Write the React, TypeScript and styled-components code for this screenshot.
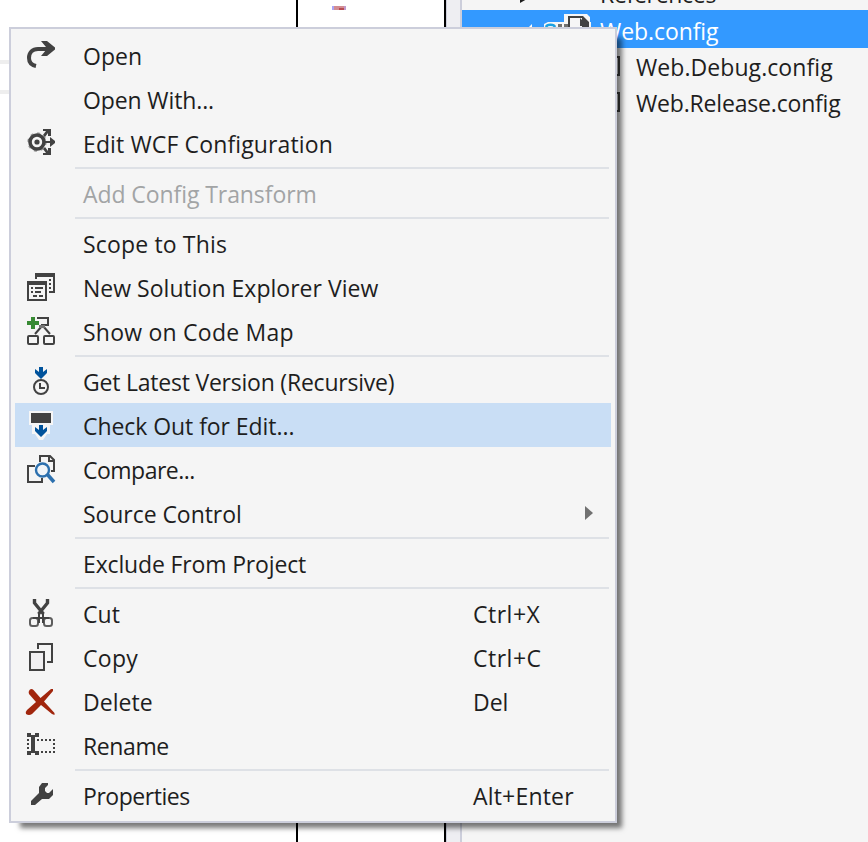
import React from "react";
import styled, { createGlobalStyle } from "styled-components";

const GlobalStyle = createGlobalStyle`
  body { margin: 0; background: #fff; overflow: hidden; }
  * { box-sizing: border-box; }
`;

const ink = "#424242";
const blue = "#00539c";

const Screen = styled.main`
  position: relative;
  display: flex;
  width: 868px;
  height: 842px;
  overflow: hidden;
  background: #fff;
  color: #1e1e1e;
  font: 23px/1 "Open Sans", "Noto Sans", sans-serif;
  white-space: pre;
`;
const Editor = styled.section`
  width: 298px;
  padding-top: 60px;
  border-right: 2px solid #000;
`;
const Rules = styled.div`
  height: 34px;
  border: solid #eee;
  border-width: 4px 0;
`;
const Document = styled.section`
  width: 148px;
  padding: 6px 0 0 34px;
  border-right: 2px solid #000;
`;
const Splitter = styled.div`
  width: 16px;
  background: #eeeef2;
  border: solid #cccedb;
  border-width: 0 2px 0 1px;
`;
const Explorer = styled.aside`
  flex: 1;
  background: #f5f5f5;
  overflow: hidden;
`;
const TreeRow = styled.div<{ $selected?: boolean; $height: number; $indent: number }>`
  display: flex;
  align-items: flex-end;
  height: ${(p) => p.$height}px;
  padding-left: ${(p) => p.$indent}px;
  background: ${(p) => (p.$selected ? "#3399ff" : "transparent")};
  color: ${(p) => (p.$selected ? "#fff" : "#1e1e1e")};
`;
const TreeLabel = styled.span<{ $track: number; $lift?: boolean }>`
  height: ${(p) => (p.$lift ? 33 : 32)}px;
  line-height: 32px;
  letter-spacing: ${(p) => p.$track}px;
`;
const Drawing = styled.svg`
  display: block;
  flex: none;
  overflow: visible;
`;

const Menu = styled.div`
  position: absolute;
  left: 9px;
  top: 27px;
  width: 608px;
  height: 796px;
  padding: 4px;
  background: #f5f5f5;
  border: 2px solid #cccedb;
  box-shadow: 8px 8px 5px -3px rgba(0, 0, 0, 0.53);
`;
const Item = styled.div<{ $active?: boolean; $disabled?: boolean }>`
  display: grid;
  grid-template-columns: 58px 390px 112px 1fr;
  align-items: center;
  height: 44px;
  padding-left: 10px;
  background: ${(p) => (p.$active ? "#c9def5" : "transparent")};
  color: ${(p) => (p.$disabled ? "#a2a4a5" : "#1e1e1e")};
`;
const Label = styled.span<{ $track: number }>`
  padding-top: 2px;
  line-height: 32px;
  letter-spacing: ${(p) => p.$track}px;
`;
const Separator = styled.div`
  height: 6px;
  margin: 0 2px 0 60px;
  border: solid transparent;
  border-width: 2px 0;
  background: #dee1e6 content-box;
`;

const Plain = { fill: "none", stroke: ink, strokeWidth: 2 };
const downArrow = "M14 0h4v5l4-3v4l-6 6-6-6V2l4 3z";

const icons: Record<string, React.ReactNode> = {
  open: (
    <g>
      <path d="M11 27C6.500 26 4 23 4 19c0-5.500 3.500-9 9-9h12" fill="none" stroke={ink} strokeWidth="4" />
      <path d="M16 2h6l8 6.500v2L22 17h-6l5-6V8z" fill={ink} />
    </g>
  ),
  wcf: (
    <g fill={ink}>
      <circle cx="12" cy="15" r="7" fill="none" stroke={ink} strokeWidth="3.600" />
      <circle cx="12" cy="15" r="9" fill="none" stroke={ink} strokeWidth="1.400" strokeDasharray="3 4.070" opacity="0.5" />
      <circle cx="12" cy="15" r="2.600" />
      <path d="M19 14h6v-4l5 4v2l-5 4v-4h-6z" />
      <path d="M18 2h8v7h-3V6l-3 4-2-2 3-4h-3zM18 28h8v-7h-3v3l-3-4-2 2 3 4h-3z" />
    </g>
  ),
  windows: (
    <g fill={ink} shapeRendering="crispEdges">
      <path d="M10 2h20v20h-6v-2h4V6H12v2h-2zM24 8h2v2h-2zM24 12h2v2h-2zM24 16h2v2h-2z" />
      <path fillRule="evenodd" d="M2 10h20v20H2zM4 14v14h16V14z" />
      <path d="M6 16h2v2H6zM10 16h8v2h-8zM6 20h2v2H6zM10 20h6v2h-6zM8 24h4v2H8zM14 24h4v2h-4z" />
    </g>
  ),
  map: (
    <g>
      <path d="M12 3h11v7h-7M17 11l-7 8M18 11l7 8" {...Plain} />
      <path d="M14 10h6v3h-6z" fill="#777" />
      <rect x="3" y="21" width="10" height="8" rx="1" {...Plain} />
      <rect x="19" y="21" width="10" height="8" rx="1" {...Plain} />
      <path d="M6 2h4v4h4v4h-4v4H6v-4H2V6h4z" fill="#388a34" />
    </g>
  ),
  latest: (
    <g>
      <path d={downArrow} transform="translate(0 2)" fill={blue} />
      <circle cx="16" cy="22" r="7" {...Plain} />
      <path d="M15 18v5h5" {...Plain} />
    </g>
  ),
  checkout: (
    <g>
      <path d="M4 2h24v14h-3v9h-3l-4 6h-4l-4-6H7v-9H4z" fill="#f6f6f6" />
      <path d="M6 4h20v10H6z" fill={ink} />
      <path d={downArrow} transform="translate(0 16)" fill={blue} />
    </g>
  ),
  compare: (
    <g>
      <path d="M15 9V3h10l4 4v11h-3M24 3v5h5M10 13H3v16h14v-4" {...Plain} />
      <circle cx="17.500" cy="17" r="6.500" fill="#f0f4f8" stroke="#2c70ae" strokeWidth="2.400" />
      <path d="M22 21l7 8" fill="none" stroke="#2c70ae" strokeWidth="3.500" />
    </g>
  ),
  cut: (
    <g fill="none" stroke={ink}>
      <path d="M9.500 2v4l9 11M22.500 2v4l-9 11" strokeWidth="3.400" />
      <path d="M14 16v10M18 16v10M8 21h16" strokeWidth="2" />
      <rect x="5" y="21" width="8" height="8" rx="2.500" strokeWidth="2" opacity="0.85" />
      <rect x="19" y="21" width="8" height="8" rx="2.500" strokeWidth="2" opacity="0.85" />
    </g>
  ),
  copy: (
    <g>
      <path d="M13 8V3h14v18h-5" {...Plain} />
      <path d="M5 11h14v18H5z" fill="#f0eff1" stroke={ink} strokeWidth="2" />
    </g>
  ),
  remove: (
    <path d="M4.500 5q2-2 4 0l7 8L26 4h2v2L19 16.500 29.500 28v2L27 29l-11-9-9 9q-3 2-6 0-1-2 1-4l9-8-7-8q-1-2 .500-4z" fill="#a1260d" />
  ),
  rename: (
    <g fill={ink} shapeRendering="crispEdges">
      <path d="M2 4h4v2h4V4h4v4h-4v14h4v4h-4v-2H6v2H2v-4h4V8H2z" />
      <path d="M12 11h18M12 23h18" stroke={ink} strokeWidth="2" strokeDasharray="2 2" />
      <path d="M3 10v12M29 10v14" stroke={ink} strokeWidth="2" strokeDasharray="2 2" />
    </g>
  ),
  wrench: (
    <path d="M17 4h6v2l-3 3v3l2 2h2l4-4v6l-4 4h-7l-7 6H6v-4l8-8V8z" fill={ink} />
  ),
};

type Entry = { text: string; icon?: string; track: number; keys?: string; keyTrack?: number; active?: boolean; disabled?: boolean; submenu?: boolean };

const groups: Entry[][] = [
  [
    { text: "Open", icon: "open", track: 0 },
    { text: "Open With...", track: -0.12 },
    { text: "Edit WCF Configuration", icon: "wcf", track: 0.13 },
  ],
  [{ text: "Add Config Transform", disabled: true, track: -0.08 }],
  [
    { text: "Scope to This", track: 0.16 },
    { text: "New Solution Explorer View", icon: "windows", track: 0.02 },
    { text: "Show on Code Map", icon: "map", track: 0.23 },
  ],
  [
    { text: "Get Latest Version (Recursive)", icon: "latest", track: -0.22 },
    { text: "Check Out for Edit...", icon: "checkout", active: true, track: -0.06 },
    { text: "Compare...", icon: "compare", track: -0.5 },
    { text: "Source Control", submenu: true, track: -0.06 },
  ],
  [{ text: "Exclude From Project", track: -0.15 }],
  [
    { text: "Cut", icon: "cut", keys: "Ctrl+X", track: 0.1, keyTrack: 0.5 },
    { text: "Copy", icon: "copy", keys: "Ctrl+C", track: 0.3, keyTrack: 0.5 },
    { text: "Delete", icon: "remove", keys: "Del", track: 0.05, keyTrack: 0 },
    { text: "Rename", icon: "rename", track: -0.4 },
  ],
  [{ text: "Properties", icon: "wrench", keys: "Alt+Enter", track: -0.45, keyTrack: 0.18 }],
];

function MenuItem({ entry }: { entry: Entry }) {
  return (
    <Item $active={entry.active} $disabled={entry.disabled}>
      <Drawing width="32" height="32" viewBox="0 0 32 32">{entry.icon && icons[entry.icon]}</Drawing>
      <Label $track={entry.track}>{entry.text}</Label>
      <Label $track={entry.keyTrack ?? 0}>{entry.keys}</Label>
      {entry.submenu && (
        <Drawing width="8" height="14" viewBox="0 0 8 14"><path d="M0 0l8 7-8 7z" fill="#717171" /></Drawing>
      )}
    </Item>
  );
}

function FileEdge() {
  return (
    <Drawing width="19" height="30" viewBox="0 0 19 30">
      <path d="M-2 3h4v18h-4" {...Plain} />
    </Drawing>
  );
}

export default function App() {
  return (
    <>
      <GlobalStyle />
      <Screen>
        <Editor><Rules /></Editor>
        <Document>
          <Drawing width="14" height="5" viewBox="0 0 14 5">
            <path d="M0 0h14v4H0z" fill="#d28c91" />
            <path d="M0 0h2v4H0z" fill="#a9a5f5" />
            <path d="M7 2h5v2H7z" fill="#b94b50" />
            <path d="M12 0h2v4h-2z" fill="#c19acb" />
          </Drawing>
        </Document>
        <Splitter />
        <Explorer>
          <TreeRow $height={10} $indent={58}>
            <Drawing width="80" height="10" viewBox="0 0 80 10"><path d="M0-5l7 4-7 4z" fill="#1e1e1e" /></Drawing>
            <TreeLabel $track={-0.3}>References</TreeLabel>
          </TreeRow>
          <TreeRow $selected $height={38} $indent={58}>
            <Drawing width="80" height="38" viewBox="0 0 80 38">
              <path d="M12 14v8H4z" fill="#fff" />
              <path d="M24 14l4-2h16V4h23l3 3v5h1v12H24z" fill="#f6f6f6" />
              <path d="M26 17c1-3 8-3 9 0" fill="none" stroke="#1ba1e2" strokeWidth="2.500" />
              <path d="M38 14h4v4h-4zM44 14h4v4h-4z" fill="#717171" />
              <path fillRule="evenodd" d="M48 6h15l6 6v6H48zM50 8v10h12V8z" fill={ink} />
              <path d="M60 8l8 8h-8z" fill={ink} />
            </Drawing>
            <TreeLabel $track={-0.08} $lift>Web.config</TreeLabel>
          </TreeRow>
          <TreeRow $height={36} $indent={155}><FileEdge /><TreeLabel $track={0.07} $lift>Web.Debug.config</TreeLabel></TreeRow>
          <TreeRow $height={36} $indent={155}><FileEdge /><TreeLabel $track={-0.18} $lift>Web.Release.config</TreeLabel></TreeRow>
        </Explorer>
        <Menu>
          {groups.map((group, index) => (
            <React.Fragment key={group[0].text}>
              {index > 0 && <Separator />}
              {group.map((entry) => <MenuItem key={entry.text} entry={entry} />)}
            </React.Fragment>
          ))}
        </Menu>
      </Screen>
    </>
  );
}
